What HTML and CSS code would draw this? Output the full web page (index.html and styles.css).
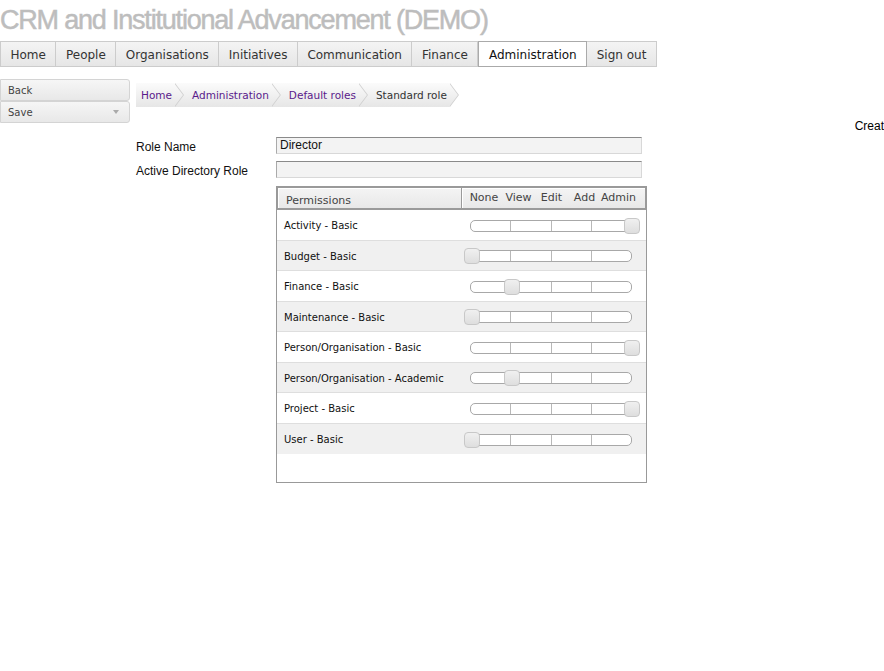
FILE: index.html
```html
<!DOCTYPE html>
<html>
<head>
<meta charset="utf-8">
<link rel="stylesheet" href="styles.css">
</head>
<body>
<h1 class="title">CRM and Institutional Advancement (DEMO)</h1>
<nav class="tabs">
  <a class="tab">Home</a><a class="tab">People</a><a class="tab">Organisations</a><a class="tab">Initiatives</a><a class="tab">Communication</a><a class="tab">Finance</a><a class="tab active">Administration</a><a class="tab">Sign out</a>
</nav>
<div class="main">
  <aside class="side">
    <button class="btn">Back</button>
    <button class="btn">Save<span class="caret"></span></button>
  </aside>
  <section class="content">
    <div class="crumbs">
      <a class="crumb link">Home</a><a class="crumb link">Administration</a><a class="crumb link">Default roles</a><a class="crumb">Standard role</a>
    </div>
    <div class="meta">Creat</div>
    <div class="form">
      <label class="lbl">Role Name</label>
      <div class="input">Director</div>
      <label class="lbl">Active Directory Role</label>
      <div class="input"></div>
      <div></div>
      <div class="perms">
        <div class="phead">
          <div class="hcell hname">Permissions</div>
          <div class="hcell hlevels"><span>None</span><span>View</span><span>Edit</span><span>Add</span><span>Admin</span></div>
        </div>
        <div class="prow"><div class="pname">Activity - Basic</div><div class="slider"><div class="track"><i></i><i></i><i></i><i></i></div><div class="handle" style="left:154px"></div></div></div>
        <div class="prow alt"><div class="pname">Budget - Basic</div><div class="slider"><div class="track"><i></i><i></i><i></i><i></i></div><div class="handle" style="left:-6px"></div></div></div>
        <div class="prow"><div class="pname">Finance - Basic</div><div class="slider"><div class="track"><i></i><i></i><i></i><i></i></div><div class="handle" style="left:34px"></div></div></div>
        <div class="prow alt"><div class="pname">Maintenance - Basic</div><div class="slider"><div class="track"><i></i><i></i><i></i><i></i></div><div class="handle" style="left:-6px"></div></div></div>
        <div class="prow"><div class="pname">Person/Organisation - Basic</div><div class="slider"><div class="track"><i></i><i></i><i></i><i></i></div><div class="handle" style="left:154px"></div></div></div>
        <div class="prow alt"><div class="pname">Person/Organisation - Academic</div><div class="slider"><div class="track"><i></i><i></i><i></i><i></i></div><div class="handle" style="left:34px"></div></div></div>
        <div class="prow"><div class="pname">Project - Basic</div><div class="slider"><div class="track"><i></i><i></i><i></i><i></i></div><div class="handle" style="left:154px"></div></div></div>
        <div class="prow alt"><div class="pname">User - Basic</div><div class="slider"><div class="track"><i></i><i></i><i></i><i></i></div><div class="handle" style="left:-6px"></div></div></div>
      </div>
    </div>
  </section>
</div>
</body>
</html>
```
FILE: styles.css
```css
* { box-sizing: border-box; }
html, body { margin: 0; padding: 0; background: #fff; overflow: hidden; }
body { font-family: "DejaVu Sans", Tahoma, sans-serif; color: #222; width: 884px; }

.title {
  margin: 0;
  height: 41px;
  padding-top: 4px;
  font-family: "Liberation Sans", Arial, sans-serif;
  font-weight: normal;
  font-size: 27px;
  letter-spacing: -1.2px;
  line-height: 32px;
  color: #bdbdbd;
  -webkit-text-stroke: 0.5px #bdbdbd;
  white-space: nowrap;
}

.tabs { display: flex; height: 26px; }
.tab {
  display: block;
  height: 26px;
  padding: 0 9.5px;
  font-size: 12px;
  line-height: 26px;
  color: #333;
  border: 1px solid #ccc;
  border-left: none;
  background: linear-gradient(#f4f4f4, #e6e6e6);
  white-space: nowrap;
}
.tab:first-child { border-left: 1px solid #ccc; }
.tab.active { background: #fff; border: 1px solid #aaa; color: #111; }

.main { display: flex; margin-top: 12px; }
.side { width: 130px; display: flex; flex-direction: column; flex: none; }
.btn {
  display: flex;
  align-items: center;
  height: 22px;
  padding: 0 7px;
  font-family: "DejaVu Sans", Tahoma, sans-serif;
  font-size: 10px;
  color: #444;
  text-align: left;
  border: 1px solid #d4d4d4;
  border-radius: 0 3px 3px 0;
  background: linear-gradient(#f6f6f6, #e8e8e8);
}
.caret {
  margin-left: auto;
  margin-right: 3px;
  width: 0; height: 0;
  border-left: 3px solid transparent;
  border-right: 3px solid transparent;
  border-top: 4px solid #aaa;
}

.content { flex: 1; margin-left: 6px; padding-top: 4px; }
.crumbs { display: flex; height: 24px; }
.crumb {
  position: relative;
  display: block;
  height: 24px;
  padding: 0 3px 0 17px;
  font-size: 10.5px;
  line-height: 24px;
  color: #333;
  background: linear-gradient(#fbfbfb, #e6e6e6);
  white-space: nowrap;
}
.crumb:first-child { padding-left: 5px; }
.crumb.link { color: #5a1a8b; }
.crumb::before,
.crumb::after {
  content: "";
  position: absolute;
  top: 0;
  width: 9px;
  height: 24px;
  clip-path: polygon(0 0, 100% 50%, 0 100%);
  z-index: 1;
}
.crumb::before { right: -9px; background: #cfcfcf; }
.crumb::after { right: -8px; background: linear-gradient(#fbfbfb, #e6e6e6); }

.meta {
  text-align: right;
  font-family: "Liberation Sans", Arial, sans-serif;
  font-size: 12px;
  color: #000;
  height: 14px;
  line-height: 14px;
  margin-top: 12px;
  white-space: nowrap;
}

.form {
  display: grid;
  grid-template-columns: 140px 366px;
  row-gap: 7px;
  margin-top: 4px;
}
.lbl {
  font-family: "Liberation Sans", Arial, sans-serif;
  font-size: 12px;
  color: #111;
  height: 17px;
  line-height: 16px;
  padding-top: 2px;
}
.input {
  height: 17px;
  background: #f3f3f3;
  border: 1px solid #d8d8d8;
  border-top: 1px solid #8a8a8a;
  border-left: 1px solid #aaa;
  font-family: "Liberation Sans", Arial, sans-serif;
  font-size: 12px;
  line-height: 14px;
  padding-left: 3px;
  color: #111;
}

.perms {
  width: 371px;
  height: 297px;
  border: 1px solid #999;
  margin-top: 1px;
}
.phead { display: flex; height: 23px; }
.hcell {
  height: 23px;
  border: 1px solid #9a9a9a;
  border-width: 1px 1px 2px 1px;
  background: linear-gradient(#f4f4f4, #e8e8e8);
  box-shadow: inset 1px 1px 0 #fff;
  font-size: 11px;
  color: #444;
}
.hname { width: 185px; padding: 6px 0 0 8px; }
.hlevels {
  flex: 1;
  display: flex;
  padding: 3px 0 0 4px;
  border-left: none;
}
.hlevels span { width: 33px; text-align: center; white-space: nowrap; }
.hlevels span:first-child { width: 36px; }
.prow {
  display: flex;
  align-items: center;
  height: 30.5px;
  padding-top: 2px;
  border-bottom: 1px solid #dedede;
}
.prow.alt { background: #f0f0f0; }
.prow:last-child { border-bottom: none; }
.pname { width: 192px; padding-left: 7px; font-size: 10px; color: #111; white-space: nowrap; }
.slider { position: relative; width: 162px; height: 16px; margin-left: 1px; }
.track {
  position: absolute;
  left: 0; top: 2px;
  width: 162px; height: 12px;
  display: flex;
  border: 1px solid #a8a8a8;
  border-radius: 5px;
  background: #fff;
}
.track i { flex: 1; border-right: 1px solid #b8b8b8; }
.track i:last-child { border-right: none; }
.handle {
  position: absolute;
  top: 0;
  width: 16px; height: 16px;
  border: 1px solid #c8c8c8;
  border-radius: 4px;
  background: linear-gradient(#f0f0f0, #dedede);
}
```
